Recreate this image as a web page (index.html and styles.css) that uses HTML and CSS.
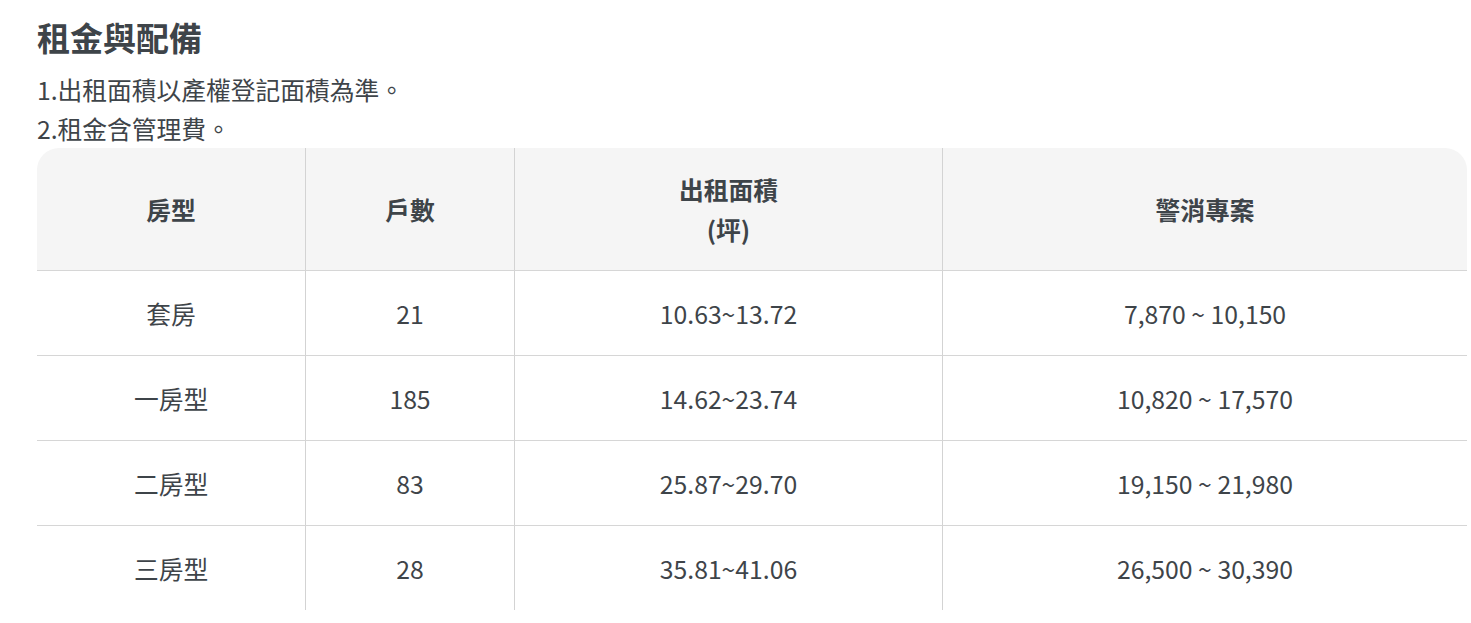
FILE: index.html
```html
<!DOCTYPE html>
<html lang="zh-Hant">
<head>
<meta charset="utf-8">
<title>租金與配備</title>
<link rel="stylesheet" href="styles.css">
</head>
<body>
<section class="rent">
  <h2 class="rent-title">租金與配備</h2>
  <p class="rent-note">1.出租面積以產權登記面積為準。</p>
  <p class="rent-note">2.租金含管理費。</p>
  <table class="rent-table">
    <colgroup>
      <col class="c1"><col class="c2"><col class="c3"><col class="c4">
    </colgroup>
    <thead>
      <tr>
        <th>房型</th>
        <th>戶數</th>
        <th>出租面積<br>(坪)</th>
        <th>警消專案</th>
      </tr>
    </thead>
    <tbody>
      <tr><td>套房</td><td>21</td><td>10.63~13.72</td><td>7,870 ~ 10,150</td></tr>
      <tr><td>一房型</td><td>185</td><td>14.62~23.74</td><td>10,820 ~ 17,570</td></tr>
      <tr><td>二房型</td><td>83</td><td>25.87~29.70</td><td>19,150 ~ 21,980</td></tr>
      <tr><td>三房型</td><td>28</td><td>35.81~41.06</td><td>26,500 ~ 30,390</td></tr>
    </tbody>
  </table>
</section>
</body>
</html>
```
FILE: styles.css
```css
html, body {
  margin: 0;
  padding: 0;
  background: #ffffff;
}
body {
  font-family: "Noto Sans CJK TC", "Noto Sans", sans-serif;
  color: #3e4449;
}
.rent {
  padding: 13px 4px 0 37px;
}
.rent-title {
  margin: 0 0 9px 0;
  font-size: 33px;
  line-height: 48px;
  font-weight: 700;
}
.rent-note {
  margin: 0;
  font-size: 24.75px;
  line-height: 39px;
}
.rent-table {
  width: 1430px;
  table-layout: fixed;
  border-collapse: separate;
  border-spacing: 0;
  font-size: 24.75px;
  line-height: 40px;
}
.c1 { width: 268px; }
.c2 { width: 209px; }
.c3 { width: 428px; }
.c4 { width: 525px; }
.rent-table th,
.rent-table td {
  text-align: center;
  padding: 22px 10px;
  border-left: 1px solid #d3d3d3;
}
.rent-table th:first-child,
.rent-table td:first-child {
  border-left: none;
}
.rent-table th {
  background: #f5f5f5;
  font-weight: 700;
  padding: 21px 10px 21px;
  border-bottom: 1px solid #d6d6d6;
}
.rent-table th:first-child { border-top-left-radius: 22px; }
.rent-table th:last-child { border-top-right-radius: 22px; }
.rent-table td {
  font-weight: 400;
  border-bottom: 1px solid #d6d6d6;
}
.rent-table tbody tr:last-child td {
  border-bottom: none;
}
```
